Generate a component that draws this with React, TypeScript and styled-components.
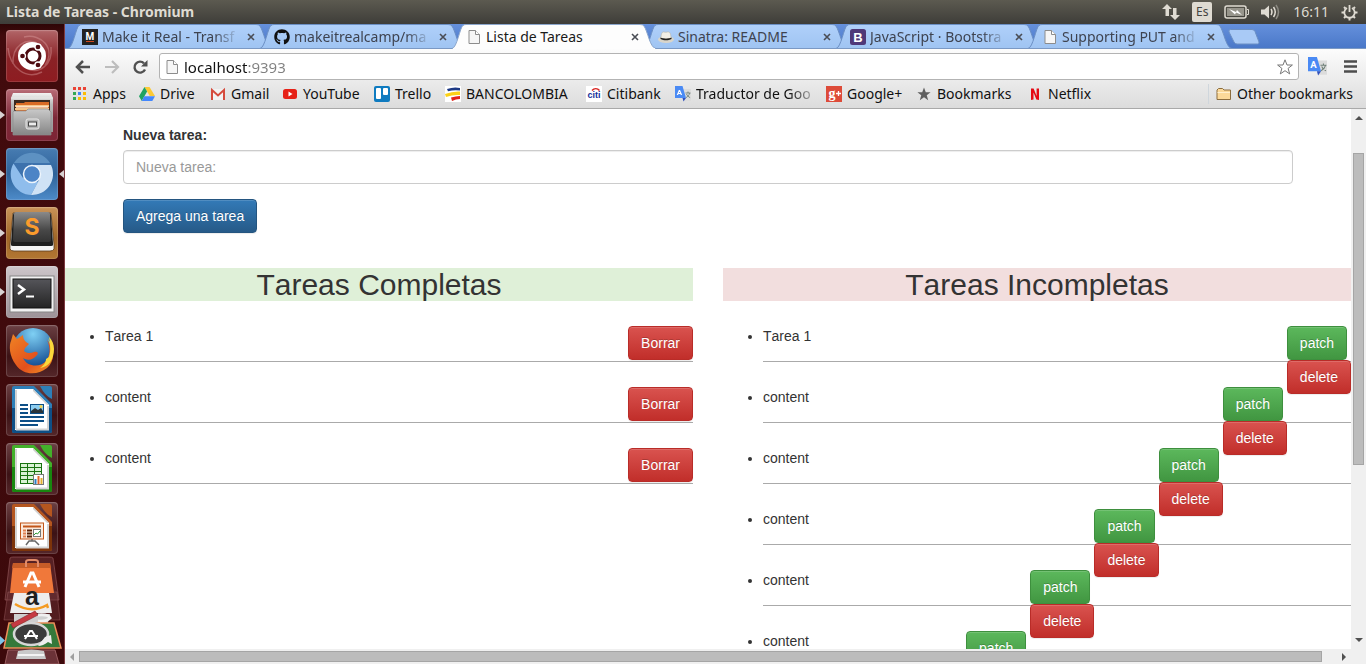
import React from "react";
import styled, { createGlobalStyle, css } from "styled-components";
import { FaGithub } from "react-icons/fa";

const uiFont = `"Noto Sans", "Open Sans", sans-serif`;
const pageFont = `"Liberation Sans", Arial, sans-serif`;

const GlobalStyle = createGlobalStyle`
  *, *::before, *::after { box-sizing: border-box; }
  body { margin: 0; background: #fff; }
  button, input { font: inherit; }
  button { cursor: pointer; }
  svg { display: block; flex: none; }
`;

/* ---------- desktop ---------- */

const Desktop = styled.div`
  display: flex;
  flex-direction: column;
  height: 100vh;
  overflow: hidden;
  font-family: ${uiFont};
  font-size: 14px;
`;

const SystemBar = styled.header`
  flex: none;
  display: flex;
  align-items: center;
  justify-content: space-between;
  height: 24px;
  padding: 0 8px 0 6px;
  background: linear-gradient(#5c5a50, #3e3d39);
  color: #dfdbd2;
`;

const WindowTitle = styled.h1`
  margin: 0;
  font-size: 14px;
  line-height: 24px;
  font-weight: 700;
  white-space: nowrap;
`;

const Indicators = styled.div`
  display: flex;
  align-items: center;
  gap: 12px;
`;

const Keyboard = styled.span`
  width: 20px;
  height: 20px;
  border-radius: 2px;
  background: #dfdbd2;
  color: #45443f;
  font-size: 12px;
  line-height: 20px;
  text-align: center;
`;

const Clock = styled.time`
  font-size: 14px;
  line-height: 20px;
`;

const Workspace = styled.div`
  flex: 1;
  min-height: 0;
  display: flex;
`;

/* ---------- launcher ---------- */

const Launcher = styled.nav`
  flex: none;
  display: flex;
  flex-direction: column;
  gap: 7px;
  width: 65px;
  padding: 6px 0 0 6px;
  border-right: 1px solid #7d3a40;
  background: linear-gradient(#2e0506, #420b0d 12px, #3d090b);
  overflow: hidden;
`;

const arrowLeft = css`
  &::before {
    content: "";
    position: absolute;
    left: -6px;
    top: 22px;
    border: 4px solid transparent;
    border-left: 5px solid #d8d2d2;
    border-right: 0;
  }
`;
const arrowRight = css`
  &::after {
    content: "";
    position: absolute;
    right: -6px;
    top: 22px;
    border: 4px solid transparent;
    border-right: 5px solid #d8d2d2;
    border-left: 0;
  }
`;

const Tile = styled.button<{ $bg: string; $running?: boolean; $active?: boolean }>`
  position: relative;
  flex: none;
  width: 52px;
  height: 52px;
  padding: 0;
  border: 0;
  border-radius: 4px;
  background: ${(p) => p.$bg};
  box-shadow: inset 0 0 0 1px rgba(255, 255, 255, 0.12), inset 0 1px 2px rgba(255, 255, 255, 0.15);
  ${(p) => p.$running && arrowLeft}
  ${(p) => p.$active && arrowRight}
`;

const Stack = styled.div`
  margin: -7px 0 0 -6px;
`;

/* ---------- browser chrome ---------- */

const Browser = styled.div`
  flex: 1;
  min-width: 0;
  display: flex;
  flex-direction: column;
`;

const TabStrip = styled.div`
  flex: none;
  display: flex;
  align-items: flex-end;
  height: 25px;
  padding-left: 3px;
  background: linear-gradient(#6590dc, #4a78c8);
  border-bottom: 1px solid #7b99c4;
`;

const TabBox = styled.div<{ $active?: boolean }>`
  position: relative;
  z-index: ${(p) => (p.$active ? 2 : 1)};
  flex: 0 1 204px;
  display: flex;
  align-items: center;
  gap: 4px;
  min-width: 0;
  height: 25px;
  margin: 0 -12px -1px 0;
  padding: 0 13px 0 14px;
  color: ${(p) => (p.$active ? "#1a1a1a" : "#3e4350")};
`;

const TabShape = styled.svg`
  position: absolute;
  inset: 0;
  width: 100%;
  height: 100%;
  z-index: -1;
`;

const TabTitle = styled.button<{ $fade?: boolean }>`
  flex: 1;
  min-width: 0;
  padding: 0;
  border: 0;
  background: none;
  color: inherit;
  font-size: 14px;
  line-height: 24px;
  text-align: left;
  white-space: nowrap;
  ${(p) => p.$fade && css`mask-image: linear-gradient(90deg, #000 82%, transparent);`}
`;

const TabClose = styled.button`
  flex: none;
  width: 16px;
  height: 16px;
  padding: 4px;
  border: 0;
  background: none;
  color: #4a4d55;
`;

const NewTab = styled.button`
  align-self: flex-start;
  margin: 5px 0 0 8px;
  padding: 0;
  border: 0;
  background: none;
`;

const ChromeBars = styled.div`
  flex: none;
  border-bottom: 1px solid #a9a9a9;
  background: linear-gradient(#fcfcfc, #ececec 30px, #dcdcdc);
`;

const Toolbar = styled.div`
  display: flex;
  align-items: center;
  height: 31px;
  padding: 4px 9px 0 10px;
`;

const IconButton = styled.button<{ $gap?: number }>`
  flex: none;
  padding: 0;
  margin-right: ${(p) => p.$gap ?? 0}px;
  border: 0;
  background: none;
`;

const Omnibox = styled.form`
  flex: 1;
  min-width: 0;
  display: flex;
  align-items: center;
  gap: 4px;
  height: 27px;
  margin-right: 9px;
  padding: 0 4px;
  border: 1px solid #b3b3b3;
  border-radius: 3px;
  background: #fff;
`;

const Address = styled.input`
  flex: 1;
  min-width: 0;
  height: 24px;
  padding: 0;
  border: 0;
  outline: 0;
  font-size: 15px;
  line-height: 20px;
  background: linear-gradient(90deg, #111 64px, #808080 64px);
  background-clip: text;
  -webkit-background-clip: text;
  -webkit-text-fill-color: transparent;
`;

const Bookmarks = styled.nav`
  display: flex;
  align-items: center;
  gap: 12px;
  height: 28px;
  padding: 0 8px 0 7px;
`;

const Bookmark = styled.a<{ $width?: number; $fade?: boolean }>`
  flex: 0 0 ${(p) => (p.$width ? `${p.$width}px` : "auto")};
  display: flex;
  align-items: center;
  gap: 5px;
  color: #111;
  font-size: 14px;
  line-height: 20px;
  text-decoration: none;
  white-space: nowrap;
  ${(p) => p.$fade && css`mask-image: linear-gradient(90deg, #000 82%, rgba(0, 0, 0, 0.2));`}
`;

const OtherBookmarks = styled.div`
  display: flex;
  margin-left: auto;
  padding-left: 7px;
  border-left: 1px solid #cfd6dc;
`;

/* ---------- page viewport ---------- */

const Viewport = styled.div`
  flex: 1;
  min-height: 0;
  display: grid;
  grid-template: minmax(0, 1fr) 15px / minmax(0, 1fr) 15px;
  background: #f0f0f0;
`;

const Page = styled.main`
  overflow: hidden;
  padding-top: 16px;
  background: #fff;
  color: #333;
  font-family: ${pageFont};
  font-size: 14px;
  line-height: 20px;
  font-kerning: none;
`;

const TaskForm = styled.form`
  max-width: 1170px;
  margin: 0 auto 35px;
`;

const Label = styled.label`
  display: block;
  margin-bottom: 5px;
  font-weight: 700;
`;

const TextField = styled.input`
  display: block;
  width: 100%;
  height: 34px;
  margin-bottom: 15px;
  padding: 6px 12px;
  border: 1px solid #ccc;
  border-radius: 4px;
  box-shadow: inset 0 1px 1px rgba(0, 0, 0, 0.075);
  color: #555;
  &::placeholder {
    color: #999;
    opacity: 1;
  }
`;

const tones = {
  primary: ["#337ab7", "#265a88", "#245580"],
  success: ["#5cb85c", "#419641", "#3e8f3e"],
  danger: ["#d9534f", "#c12e2a", "#b92c28"],
};

const Button = styled.button<{ $tone: keyof typeof tones }>`
  display: block;
  height: 34px;
  padding: 6px 12px;
  border: 1px solid ${(p) => tones[p.$tone][2]};
  border-radius: 4px;
  background: linear-gradient(${(p) => tones[p.$tone][0]}, ${(p) => tones[p.$tone][1]});
  box-shadow: inset 0 1px 0 rgba(255, 255, 255, 0.15), 0 1px 1px rgba(0, 0, 0, 0.075);
  color: #fff;
  line-height: 20px;
  text-shadow: 0 -1px 0 rgba(0, 0, 0, 0.2);
`;

const Columns = styled.div`
  display: grid;
  grid-template-columns: 1fr 1fr;
  gap: 30px;
`;

const ColumnTitle = styled.h2<{ $bg: string }>`
  margin: 0 0 25px;
  background: ${(p) => p.$bg};
  font-size: 30px;
  line-height: 33px;
  font-weight: 400;
  text-align: center;
`;

const TaskList = styled.ul`
  margin: 0;
  padding-left: 40px;
`;

const Task = styled.li`
  height: 36px;
  margin-bottom: 25px;
  border-bottom: 1px solid #aaa;
`;

const Actions = styled.div`
  float: right;
  display: flex;
  flex-direction: column;
  align-items: flex-start;
`;

/* ---------- scrollbars ---------- */

const VerticalBar = styled.div`
  display: grid;
  grid-template-rows: 18px 26fr 312fr 166fr 18px;
  justify-items: center;
  align-items: center;
`;

const HorizontalBar = styled.div`
  display: grid;
  grid-template-columns: 14px 1243fr 15fr 14px;
  justify-items: center;
  align-items: center;
`;

const Thumb = styled.div<{ $vertical?: boolean }>`
  grid-area: ${(p) => (p.$vertical ? "3 / 1" : "1 / 2")};
  width: ${(p) => (p.$vertical ? "11px" : "100%")};
  height: ${(p) => (p.$vertical ? "100%" : "11px")};
  border: 1px solid #a5a5a5;
  background: #bcbcbc;
`;

const Arrow = styled.span<{ $dir: "up" | "down" | "left" | "right"; $dim?: boolean }>`
  border: 4px solid transparent;
  ${(p) => {
    const c = p.$dim ? "#a0a0a0" : "#505050";
    switch (p.$dir) {
      case "up": return `grid-row: 1; border-top: 0; border-bottom-color: ${c};`;
      case "down": return `grid-row: 5; border-bottom: 0; border-top-color: ${c};`;
      case "left": return `grid-column: 1; border-left: 0; border-right-color: ${c};`;
      default: return `grid-column: 4; border-right: 0; border-left-color: ${c};`;
    }
  }}
`;

/* ---------- small drawings ---------- */

const FileIcon = () => (
  <svg width="16" height="16" viewBox="0 0 16 16">
    <path d="M3 1.500h6.500l4 4v9H3z" fill="#f6f6f6" stroke="#8c8c8c" />
    <path d="M9.500 1.500v4h4" fill="#fff" stroke="#8c8c8c" />
  </svg>
);

const TranslateIcon = ({ size = 16 }: { size?: number }) => (
  <svg width={size} height={size} viewBox="0 0 16 16">
    <path d="M7 3h9v12H9z" fill="#dcdcdc" />
    <path d="M10.500 7h5M13 5.500V7m1.800 0c-.6 2-2 3.700-3.800 4.600M11.500 8c.7 1.600 2 2.900 3.600 3.600" stroke="#6f8078" strokeWidth=".9" fill="none" />
    <path d="M0 0h7.500l3.500 12H0z" fill="#4a8af4" />
    <path d="M7.500 12H11l-2.500 3.500z" fill="#3152bd" />
    <text x="4.500" y="9" fontSize="8" fontWeight="700" fill="#fff" textAnchor="middle" fontFamily="Roboto, sans-serif">A</text>
  </svg>
);

const MakeItRealIcon = () => (
  <svg width="16" height="16" viewBox="0 0 16 16">
    <rect width="16" height="16" fill="#222" />
    <text x="8" y="10.500" fontSize="10" fontWeight="700" fill="#fff" textAnchor="middle" fontFamily="Roboto, sans-serif">M</text>
    <path d="M4 12.500h8" stroke="#d1491f" />
  </svg>
);

const HatIcon = () => (
  <svg width="16" height="16" viewBox="0 0 16 16">
    <ellipse cx="8" cy="10.500" rx="8" ry="3.500" fill="#d9d5ca" />
    <path d="M3 9.500C3 5 4 2.500 6 3c1 .4 2 .4 3.500 0C12 2.500 13 5 13 9.500z" fill="#f1eee6" stroke="#bbb6a8" strokeWidth=".6" />
    <path d="M2.500 8.500c2.500 1.500 8.500 1.500 11 0v1.500c-3 1.800-8 1.800-11 0z" fill="#222" />
  </svg>
);

const BootstrapIcon = () => (
  <svg width="16" height="16" viewBox="0 0 16 16">
    <rect width="16" height="16" rx="2.500" fill="#4f3878" />
    <text x="8" y="12.500" fontSize="13" fontWeight="700" fill="#fff" textAnchor="middle" fontFamily="Liberation Sans, sans-serif">B</text>
  </svg>
);

const AppsIcon = () => {
  const colors = ["#ea4335", "#ea4335", "#ea4335", "#34a853", "#4285f4", "#fbbc05", "#34a853", "#fbbc05", "#fbbc05"];
  return (
    <svg width="16" height="16" viewBox="0 0 16 16">
      {colors.map((c, i) => (
        <rect key={i} x={1 + (i % 3) * 5} y={1 + Math.floor(i / 3) * 5} width="3" height="3" fill={c} />
      ))}
    </svg>
  );
};

const DriveIcon = () => (
  <svg width="16" height="16" viewBox="0 0 16 16">
    <path d="M5.500 1h5L16 10h-5.300z" fill="#fcc934" />
    <path d="M5.500 1l2.600 4.500L2.700 15 0 10.300z" fill="#1ea362" />
    <path d="M5.300 10.300H16L13.300 15H2.700z" fill="#4387fd" />
  </svg>
);

const GmailIcon = () => (
  <svg width="16" height="16" viewBox="0 0 16 16">
    <path d="M1 3h14v11H1z" fill="#f2f2f2" />
    <path d="M2 14V4l6 5.500L14 4v10" fill="none" stroke="#d54b3d" strokeWidth="2" />
  </svg>
);

const YoutubeIcon = () => (
  <svg width="16" height="16" viewBox="0 0 16 16">
    <rect x="1" y="3" width="14" height="10" rx="2.500" fill="#e62117" />
    <path d="M6.500 5.500v5l4-2.500z" fill="#fff" />
  </svg>
);

const TrelloIcon = () => (
  <svg width="16" height="16" viewBox="0 0 16 16">
    <rect width="16" height="16" rx="2" fill="#0f7bc0" />
    <rect x="2" y="2" width="5" height="11" rx="1" fill="#fff" />
    <rect x="9" y="2" width="5" height="7" rx="1" fill="#fff" />
  </svg>
);

const BancolombiaIcon = () => (
  <svg width="16" height="16" viewBox="0 0 16 16">
    <rect width="16" height="16" fill="#fff" />
    <path d="M2 3q7-2.500 13-1v2.500q-6-1-12 .8z" fill="#1e3a85" />
    <path d="M0 8q8-3 15-2.500v3.500q-7-.5-14 2z" fill="#fcd116" />
    <path d="M6 11.500q5-1.500 9-1.500v3q-4 0-8 2z" fill="#e2231a" />
  </svg>
);

const CitiIcon = () => (
  <svg width="16" height="16" viewBox="0 0 16 16">
    <rect width="16" height="16" fill="#fff" />
    <path d="M6 4.500c2-2.500 5.500-2.500 7.500 0" fill="none" stroke="#d8231f" strokeWidth="1.400" />
    <text x="8" y="12" fontSize="9" fontWeight="700" fill="#14309a" textAnchor="middle" fontFamily="Liberation Sans, sans-serif">citi</text>
  </svg>
);

const GooglePlusIcon = () => (
  <svg width="16" height="16" viewBox="0 0 16 16">
    <rect width="16" height="16" fill="#dd4b39" />
    <text x="6" y="11.500" fontSize="14" fontWeight="700" fill="#fff" textAnchor="middle" fontFamily="Liberation Serif, serif">g</text>
    <path d="M12.500 5v5M10 7.500h5" stroke="#fff" strokeWidth="1.300" />
  </svg>
);

const starPath = "M8 .8l2 5.200h5.400l-4.300 3.400 1.600 5.500L8 11.700l-4.700 3.200 1.600-5.500L.6 6H6z";

const NetflixIcon = () => (
  <svg width="16" height="16" viewBox="0 0 16 16">
    <path d="M4 2.500h2.600l3 7.500V2.500H12v11.500L9.400 13.500 6.500 6.500v7L4 14z" fill="#e50914" />
  </svg>
);

const FolderIcon = () => (
  <svg width="16" height="16" viewBox="0 0 16 16">
    <path d="M1 13.500V4l1.500-1.500h4L8 4h6.500v9.500z" fill="#fbd999" stroke="#8c6d3e" />
    <path d="M1.500 6.500h12.500" stroke="#fff0cf" />
  </svg>
);

/* ---------- launcher drawings ---------- */

const UbuntuArt = () => (
  <svg width="52" height="52" viewBox="0 0 52 52">
    <path d="M7 34C6 15 20 8 31 13M18 7c18-4 32 12 21 28M45 17c2 18-12 28-25 21M2 18c2 20 18 32 34 24" fill="none" stroke="#e0a4a4" strokeOpacity=".4" strokeWidth="1.500" />
    <circle cx="26" cy="26" r="14" fill="#fff" />
    <circle cx="27" cy="26" r="7" fill="none" stroke="#4d0b10" strokeWidth="3" />
    {[[16.500, 26], [32, 17], [32, 35]].map(([x, y]) => (
      <circle key={`${x}-${y}`} cx={x} cy={y} r="3" fill="#4d0b10" stroke="#fff" strokeWidth="1.300" />
    ))}
  </svg>
);

const FilesArt = () => (
  <svg width="52" height="52" viewBox="0 0 52 52">
    <defs>
      <linearGradient id="cab" x2="0" y2="1"><stop stopColor="#f3f3f3" /><stop offset=".3" stopColor="#b9b9b9" /><stop offset="1" stopColor="#969696" /></linearGradient>
      <linearGradient id="drawer" x2="0" y2="1"><stop stopColor="#c9c9c9" /><stop offset="1" stopColor="#858585" /></linearGradient>
    </defs>
    <path d="M7 4h38l2 5v34H5V9z" fill="url(#cab)" />
    <path d="M5 9h42" stroke="#e9e9e9" />
    <rect x="8" y="11" width="36" height="11" fill="#3c2a20" />
    <path d="M10 14h8l1-1h24v10H10z" fill="#d96b25" />
    <path d="M9 16h34v2H9zM9 19h34v2H9z" fill="#f7c68a" />
    <path d="M10 18h32" stroke="#fff" />
    <path d="M7 23l1-1h12l2-2h20l3 3v23H7z" fill="url(#drawer)" stroke="#8d8d8d" strokeWidth=".7" />
    <rect x="20" y="30" width="13" height="10" rx="2" fill="#b5b5b5" stroke="#e8e8e8" />
    <rect x="22.500" y="33" width="8" height="4" fill="#ececec" stroke="#444" />
  </svg>
);

const ChromiumArt = () => (
  <svg width="52" height="52" viewBox="0 0 52 52">
    <circle cx="26" cy="26" r="21" fill="#3d72ad" />
    <path d="M8 15a21 21 0 0 1 36 0z" fill="#5d91c2" />
    <path d="M7.500 15.500A21 21 0 0 0 25 47l7-13-6-3-9-1z" fill="#8fbdec" />
    <path d="M26 17h19a21 21 0 0 1-20 30l8-15z" fill="#cfe2f5" />
    <circle cx="26" cy="26" r="8.500" fill="#4c84c6" stroke="#eef5fc" strokeWidth="1.500" />
  </svg>
);

const SublimeArt = () => (
  <svg width="52" height="52" viewBox="0 0 52 52">
    <defs>
      <linearGradient id="key" x2="0" y2="1"><stop stopColor="#8a8a8a" /><stop offset=".6" stopColor="#484848" /><stop offset="1" stopColor="#333" /></linearGradient>
    </defs>
    <path d="M7 6h38l3 32v4q-1 2-4 2H8q-3 0-4-2v-4z" fill="#f4f4f4" stroke="#5b3c1c" strokeWidth=".8" />
    <path d="M9 6h34q2 0 2 2l2 28v2q0 1-2 1H7q-2 0-2-1v-2L7 8q0-2 2-2z" fill="#1e1e1e" />
    <path d="M10 5h32q2 0 2 2l1 25q0 3-2 3H9q-2 0-2-3L8 7q0-2 2-2z" fill="url(#key)" />
    <text x="26" y="28" fontSize="23" fontWeight="700" fill="#fb9b2c" textAnchor="middle" fontFamily="Inter, sans-serif">S</text>
  </svg>
);

const TerminalArt = () => (
  <svg width="52" height="52" viewBox="0 0 52 52">
    <defs>
      <linearGradient id="scr" x2="0" y2="1"><stop stopColor="#55555a" /><stop offset="1" stopColor="#242424" /></linearGradient>
    </defs>
    <rect x="4" y="10" width="44" height="36" fill="#f2f2f2" stroke="#868686" />
    <rect x="7" y="13" width="38" height="29" fill="url(#scr)" stroke="#111" />
    <path d="M12 19l6 4.500-6 4.500" fill="none" stroke="#fff" strokeWidth="2.500" />
    <path d="M20 30.500h8" stroke="#fff" strokeWidth="2" />
  </svg>
);

const FirefoxArt = () => (
  <svg width="52" height="52" viewBox="0 0 52 52">
    <defs>
      <radialGradient id="globe" cx=".5" cy=".15" r=".8"><stop stopColor="#7fd0f4" /><stop offset="1" stopColor="#154f94" /></radialGradient>
      <linearGradient id="fox" x2="1" y2="1"><stop stopColor="#f08423" /><stop offset=".6" stopColor="#e2501d" /><stop offset="1" stopColor="#f39a25" /></linearGradient>
    </defs>
    <circle cx="27" cy="23" r="20" fill="url(#globe)" />
    <path d="M7 9l4 5 6-4c0 3 1 5 3 7l3 2-4 4-1 3c2 2 6 3 10 1 3-1 5 1 3 3-4 5-9 6-14 3 4 9 17 10 23 3 4-5 5-13 1-21 8 10 8 21 0 28-10 8-24 7-31-3C3 31 3 20 5 16z" fill="url(#fox)" />
    <path d="M40 11c5 6 5 15 3 21l-3 2c0 4-3 7-6 9 9-1 14-9 14-19 0-5-2-9-5-12l1 5z" fill="#fbd83b" />
  </svg>
);

const OfficeArt = ({ color, dark, children }: { color: string; dark: string; children: React.ReactNode }) => (
  <svg width="52" height="52" viewBox="0 0 52 52">
    <path d="M6 4q0-2 2-2h20l18 18v27q0 2-2 2H8q-2 0-2-2z" fill={color} />
    <path d="M6 24h40v23q0 2-2 2H8q-2 0-2-2z" fill={dark} />
    <path d="M9 5h18l16 16v25H9z" fill="#fff" />
    <path d="M10 45V6M42 45V22M10 45.500h33" stroke="#d3d3d3" strokeWidth="2" fill="none" />
    <path d="M27 5v2l14 14h2z" fill="#cfcfcf" />
    <path d="M34 2h10q2 0 2 2v11q-7-3-12-13z" fill={color} />
    {children}
  </svg>
);

const StackArt = () => (
  <svg width="65" height="110" viewBox="0 0 65 110">
    <path d="M10 4q1-1 3-1h36q3 0 4 1l6 42H5z" fill="#7c4448" fillOpacity=".4" stroke="#a86a6c" strokeOpacity=".5" />
    <path d="M8 38h49l3 28H4z" fill="#733a3e" fillOpacity=".4" stroke="#a86a6c" strokeOpacity=".4" />
    <path d="M8 96h47l4 14H5z" fill="#6b3237" stroke="#9a5d60" />
    <path d="M13 9h37l4 30H10z" fill="#f0783a" />
    <path d="M13 9h37l1 5H12z" fill="#c65c28" />
    <path d="M26 13V8q0-2 3-2h6q3 0 3 2v5" fill="none" stroke="#e28b68" strokeWidth="2" />
    <path d="M25 33l6-14h2l6 14" fill="none" stroke="#fff" strokeWidth="3" />
    <path d="M23 28h18" stroke="#fff" strokeWidth="3" />
    <path d="M14 39h35l3 20H10z" fill="#ededed" />
    <text x="32" y="51" fontSize="25" fontWeight="700" fill="#1f1f1f" textAnchor="middle" fontFamily="Liberation Sans, sans-serif">a</text>
    <path d="M15 50q16 10 32 1l1 3" fill="none" stroke="#f49b22" strokeWidth="2.500" />
    <path d="M14 60h36l-3 13H14z" fill="#cfcfcf" />
    <path d="M38 61q10-1 12 3-4 4-12 3" fill="none" stroke="#f0f0f0" strokeWidth="3" />
    <path d="M9 69h45l7 25H4z" fill="#35793a" stroke="#ec8f59" strokeWidth="1.500" />
    <ellipse cx="31" cy="80" rx="17" ry="11" fill="#3b3b3b" stroke="#d6d6d6" strokeWidth="2.500" />
    <path d="M25 85l5-8h2l5 8M24 82h14" fill="none" stroke="#fff" strokeWidth="2" />
    <path d="M45 83l6-2 1 9-4-2q-5 4-10 4" fill="#eee" />
    <path d="M11 70l24-13 3 4-25 13z" fill="#c63a42" stroke="#88262b" strokeWidth=".6" />
    <path d="M18 97q14-3 26 0l2 8H16z" fill="#c9c9c9" />
    <path d="M18 101h26" stroke="#f3f3f3" strokeWidth="2" />
    <path d="M0 82l5 4.500L0 91z" fill="#7fc4e8" />
  </svg>
);

/* ---------- composed parts ---------- */

const Tab = ({ icon, title, active, fade }: { icon: React.ReactNode; title: string; active?: boolean; fade?: boolean }) => (
  <TabBox $active={active}>
    <TabShape viewBox="0 0 204 25" preserveAspectRatio="none">
      <defs>
        <linearGradient id="tabIdle" x2="0" y2="1"><stop stopColor="#b0d0fa" /><stop offset="1" stopColor="#9fc4f2" /></linearGradient>
      </defs>
      <path
        d="M0 24.500C5 24 8 3 11 1.500Q12 .5 14 .5H188Q191 .5 192 2C196 8 198 24 204 24.500"
        fill={active ? "#fdfdfd" : "url(#tabIdle)"}
        stroke={active ? "#8ba6cc" : "#6b8fc4"}
      />
      <path d={active ? "M1 24.500H203" : "M0 24.500H204"} stroke={active ? "#fdfdfd" : "#7b99c4"} />
    </TabShape>
    {icon}
    <TabTitle type="button" $fade={fade}>{title}</TabTitle>
    <TabClose type="button" aria-label={`Close ${title}`}>
      <svg width="8" height="8" viewBox="0 0 8 8"><path d="M1 1l6 6M7 1L1 7" stroke="currentColor" strokeWidth="1.600" /></svg>
    </TabClose>
  </TabBox>
);

const bookmarks = [
  { label: "Apps", width: 55, icon: <AppsIcon /> },
  { label: "Drive", width: 59, icon: <DriveIcon /> },
  { label: "Gmail", width: 60, icon: <GmailIcon /> },
  { label: "YouTube", width: 80, icon: <YoutubeIcon /> },
  { label: "Trello", width: 59, icon: <TrelloIcon /> },
  { label: "BANCOLOMBIA", width: 129, icon: <BancolombiaIcon /> },
  { label: "Citibank", width: 77, icon: <CitiIcon /> },
  { label: "Traductor de Goo", width: 139, icon: <TranslateIcon />, fade: true },
  { label: "Google+", width: 78, icon: <GooglePlusIcon /> },
  { label: "Bookmarks", width: 99, icon: <svg width="16" height="16" viewBox="-1 -1 18 18"><path d={starPath} fill="#5f5f5f" /></svg> },
  { label: "Netflix", width: 68, icon: <NetflixIcon /> },
];

const completed = ["Tarea 1", "content", "content"];
const pending = ["Tarea 1", "content", "content", "content", "content", "content"];

const officeBg = "linear-gradient(#6b4043, #3c1215 60%, #55272a)";

export default function App() {
  return (
    <Desktop>
      <GlobalStyle />
      <SystemBar>
        <WindowTitle>Lista de Tareas - Chromium</WindowTitle>
        <Indicators>
          <svg width="18" height="16" viewBox="0 0 18 16" fill="#dfdbd2">
            <path d="M5 0l5 5H7v7H3.500V5H0zM13 16l-5-5h3V4h3.500v7H18z" />
          </svg>
          <Keyboard>Es</Keyboard>
          <svg width="25" height="14" viewBox="0 0 25 14">
            <rect x="1" y="1" width="21" height="12" rx="2" fill="none" stroke="#dfdbd2" strokeWidth="1.500" />
            <rect x="3" y="3" width="17" height="8" fill="#97958c" />
            <path d="M23 4.500h1.500v5H23" fill="none" stroke="#dfdbd2" />
            <path d="M5 4l7 3 1-2 5 5-6-2.500-1 2z" fill="#fff" />
          </svg>
          <svg width="20" height="16" viewBox="0 0 20 16">
            <path d="M0 5.500h3.500L8 1.500v13l-4.500-4H0z" fill="#dfdbd2" />
            <path d="M10 5q2 3 0 6M12.500 3q3.500 5 0 10" fill="none" stroke="#dfdbd2" strokeWidth="1.500" />
            <path d="M15 1q5 7 0 14" fill="none" stroke="#8c8a82" strokeWidth="1.500" />
          </svg>
          <Clock>16:11</Clock>
          <svg width="17" height="17" viewBox="0 0 17 17" fill="none" stroke="#dfdbd2">
            <path d="M6 4a5.200 5.200 0 1 0 5 0" strokeWidth="1.800" />
            <path d="M8.500 1v7" strokeWidth="1.800" />
            <path d="M3 3l1.500 1.500M14 3l-1.500 1.500M.5 8.500h2.500M14 8.500h2.500M3 14l1.500-1.500M14 14l-1.500-1.500M8.500 14v2.500" strokeWidth="2" />
          </svg>
        </Indicators>
      </SystemBar>

      <Workspace>
        <Launcher aria-label="Launcher">
          <Tile aria-label="Ubuntu" $bg="linear-gradient(#b26568, #8a2226 55%, #8e1c21)"><UbuntuArt /></Tile>
          <Tile aria-label="Files" $running $bg="linear-gradient(#b86b76, #7d2938 55%, #7d2435)"><FilesArt /></Tile>
          <Tile aria-label="Chromium" $running $active $bg="linear-gradient(#477cb2, #2e6299 50%, #4d8bc9)"><ChromiumArt /></Tile>
          <Tile aria-label="Sublime Text" $running $bg="linear-gradient(#c99358, #a16627 60%, #b27733)"><SublimeArt /></Tile>
          <Tile aria-label="Terminal" $running $bg="linear-gradient(#cdc6ca, #9d9398)"><TerminalArt /></Tile>
          <Tile aria-label="Firefox" $bg={officeBg}><FirefoxArt /></Tile>
          <Tile aria-label="Writer" $bg={officeBg}>
            <OfficeArt color="#2d7fb8" dark="#0e4f86">
              <path d="M14 21h8M14 25h8M14 29h8M14 33h24M14 37h24M14 41h18" stroke="#0e4f86" strokeWidth="2" />
              <rect x="24.500" y="20.500" width="13" height="9" fill="#8ccdf0" stroke="#0e4f86" />
              <path d="M25 29v-2l4-3 3 2 3-2 2 3v2z" fill="#2a3338" />
              <circle cx="35" cy="22.500" r="1.500" fill="#f6d34a" />
            </OfficeArt>
          </Tile>
          <Tile aria-label="Calc" $bg={officeBg}>
            <OfficeArt color="#43b02a" dark="#18870f">
              <rect x="14.500" y="20.500" width="21" height="20" fill="#d9f2d4" stroke="#18720f" />
              <path d="M14 24.500h22M14 28.500h22M14 32.500h22M14 36.500h22M21.500 20v21M28.500 20v21" stroke="#18720f" />
              <rect x="27.500" y="31.500" width="10" height="10" fill="#fff" stroke="#777" />
              <path d="M29.500 41v-5" stroke="#2d7fc4" strokeWidth="2" />
              <path d="M32.500 41v-8" stroke="#e2662a" strokeWidth="2" />
              <path d="M35.500 41v-6" stroke="#e3b12f" strokeWidth="2" />
            </OfficeArt>
          </Tile>
          <Tile aria-label="Impress" $bg={officeBg}>
            <OfficeArt color="#b5561f" dark="#7d340a">
              <rect x="14.500" y="21" width="23" height="16" fill="#fbeadd" stroke="#c2561a" />
              <path d="M17 24.500h18" stroke="#c2561a" strokeWidth="2" />
              <path d="M17 28.500h3M17 31.500h3M17 34.500h3" stroke="#e08050" strokeWidth="2" />
              <path d="M21 28.500h5M21 31.500h5M21 34.500h5" stroke="#5a2408" strokeWidth="2" />
              <rect x="27.500" y="27.500" width="7" height="7" fill="#fff" stroke="#777" />
              <path d="M28 33l2-2 1.500 1 2.500-3" fill="none" stroke="#2a9a30" />
              <path d="M26 37v2M20 43l3-4h6l4 4" fill="none" stroke="#666" strokeWidth="1.500" />
            </OfficeArt>
          </Tile>
          <Stack><StackArt /></Stack>
        </Launcher>

        <Browser>
          <TabStrip>
            <Tab icon={<MakeItRealIcon />} title="Make it Real - Transf" fade />
            <Tab icon={<FaGithub size={16} color="#111" />} title="makeitrealcamp/ma" fade />
            <Tab icon={<FileIcon />} title="Lista de Tareas" active />
            <Tab icon={<HatIcon />} title="Sinatra: README" />
            <Tab icon={<BootstrapIcon />} title="JavaScript · Bootstra" fade />
            <Tab icon={<FileIcon />} title="Supporting PUT and" fade />
            <NewTab type="button" aria-label="New tab">
              <svg width="32" height="16" viewBox="0 0 32 16">
                <path d="M2.500.5H24q2 0 3 2l4 10.500q.5 2-1.500 2H9q-2 0-3-2L1 3Q.3.500 2.500.5z" fill="#a9caf6" stroke="#6b8fc4" />
              </svg>
            </NewTab>
          </TabStrip>

          <ChromeBars>
            <Toolbar>
              <IconButton type="button" aria-label="Back" $gap={13}>
                <svg width="16" height="16" viewBox="0 0 16 16" fill="none" stroke="#505050" strokeWidth="2.500"><path d="M15 8H2M8 2L2 8l6 6" /></svg>
              </IconButton>
              <IconButton type="button" aria-label="Forward" $gap={12}>
                <svg width="16" height="16" viewBox="0 0 16 16" fill="none" stroke="#bdbdbd" strokeWidth="2.200"><path d="M1 8h13M8 2l6 6-6 6" /></svg>
              </IconButton>
              <IconButton type="button" aria-label="Reload" $gap={11}>
                <svg width="16" height="16" viewBox="0 0 16 16"><path d="M13 10.500A5.500 5.500 0 1 1 12 4.300" fill="none" stroke="#505050" strokeWidth="2.400" /><path d="M15.500 1v6.500H9z" fill="#505050" /></svg>
              </IconButton>
              <Omnibox>
                <FileIcon />
                <Address aria-label="Address" defaultValue="localhost:9393" />
                <IconButton type="button" aria-label="Bookmark this page">
                  <svg width="18" height="18" viewBox="-1 -1 18 18"><path d={starPath} fill="#fff" stroke="#777" /></svg>
                </IconButton>
              </Omnibox>
              <IconButton type="button" aria-label="Translate" $gap={17}><TranslateIcon size={19} /></IconButton>
              <IconButton type="button" aria-label="Menu">
                <svg width="13" height="13" viewBox="0 0 13 13"><path d="M0 1.500h13M0 6.500h13M0 11.500h13" stroke="#4d4d4d" strokeWidth="2.600" /></svg>
              </IconButton>
            </Toolbar>
            <Bookmarks aria-label="Bookmarks">
              {bookmarks.map((b) => (
                <Bookmark key={b.label} href="#" $width={b.width} $fade={b.fade}>{b.icon}{b.label}</Bookmark>
              ))}
              <OtherBookmarks>
                <Bookmark href="#" $width={142}><FolderIcon />Other bookmarks</Bookmark>
              </OtherBookmarks>
            </Bookmarks>
          </ChromeBars>

          <Viewport>
            <Page>
              <TaskForm onSubmit={(e) => e.preventDefault()}>
                <Label htmlFor="task">Nueva tarea:</Label>
                <TextField id="task" type="text" placeholder="Nueva tarea:" />
                <Button type="submit" $tone="primary">Agrega una tarea</Button>
              </TaskForm>
              <Columns>
                <section>
                  <ColumnTitle $bg="#dff0d8">Tareas Completas</ColumnTitle>
                  <TaskList>
                    {completed.map((t, i) => (
                      <Task key={i}>
                        <Actions><Button type="button" $tone="danger">Borrar</Button></Actions>
                        {t}
                      </Task>
                    ))}
                  </TaskList>
                </section>
                <section>
                  <ColumnTitle $bg="#f2dede">Tareas Incompletas</ColumnTitle>
                  <TaskList>
                    {pending.map((t, i) => (
                      <Task key={i}>
                        <Actions>
                          <Button type="button" $tone="success">patch</Button>
                          <Button type="button" $tone="danger">delete</Button>
                        </Actions>
                        {t}
                      </Task>
                    ))}
                  </TaskList>
                </section>
              </Columns>
            </Page>
            <VerticalBar>
              <Arrow $dir="up" />
              <Thumb $vertical />
              <Arrow $dir="down" />
            </VerticalBar>
            <HorizontalBar>
              <Arrow $dir="left" $dim />
              <Thumb />
              <Arrow $dir="right" />
            </HorizontalBar>
          </Viewport>
        </Browser>
      </Workspace>
    </Desktop>
  );
}
